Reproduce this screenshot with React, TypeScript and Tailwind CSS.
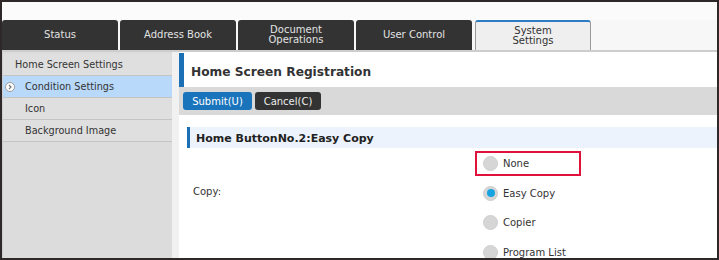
import React from 'react';

const tabs = [
  { label: ['Status'] },
  { label: ['Address Book'] },
  { label: ['Document', 'Operations'] },
  { label: ['User Control'] },
];

const sideItems = [
  { label: 'Home Screen Settings', indent: false, active: false },
  { label: 'Condition Settings', indent: true, active: true },
  { label: 'Icon', indent: true, active: false },
  { label: 'Background Image', indent: true, active: false },
];

const options = [
  { label: 'None', checked: false, boxed: true },
  { label: 'Easy Copy', checked: true, boxed: false },
  { label: 'Copier', checked: false, boxed: false },
  { label: 'Program List', checked: false, boxed: false },
];

function Radio({ checked }: { checked: boolean }) {
  return (
    <span className="w-[15px] h-[15px] rounded-full bg-[#d6d6d6] border border-[#cfcfcf] flex items-center justify-center shrink-0">
      {checked && <span className="w-[8px] h-[8px] rounded-full bg-[#17a3e0]" />}
    </span>
  );
}

export default function App() {
  return (
    <div
      className="w-[719px] h-[260px] overflow-hidden border-2 border-[#2f2828] bg-[#fafafa] flex flex-col text-[#333]"
      style={{ fontFamily: '"DejaVu Sans", Verdana, sans-serif' }}
    >
      <div className="h-[18px] shrink-0 bg-[#fbfbfb]" />

      {/* tab row */}
      <div className="h-[30px] shrink-0 flex gap-[2px] bg-[#f7f7f7]">
        {tabs.map((t) => (
          <div
            key={t.label.join(' ')}
            className="w-[116px] bg-[#333333] rounded-t-[3px] flex flex-col items-center justify-center text-[10px] leading-[10px] text-[#e2e2e2]"
          >
            {t.label.map((l) => (
              <span key={l}>{l}</span>
            ))}
          </div>
        ))}
        <div className="ml-[1px] w-[116px] bg-[#efefef] border-t-2 border-t-[#2c7cc1] border-x border-x-[#9a9a9a] rounded-t-[3px] flex flex-col items-center justify-center text-[10px] leading-[10px] text-[#333]">
          <span>System</span>
          <span>Settings</span>
        </div>
      </div>
      <div className="h-[2px] shrink-0 bg-[#cdcdcd]" />

      {/* body */}
      <div className="flex-1 flex min-h-0">
        <aside className="w-[170px] shrink-0 bg-[#dcdcdc] border-l border-[#cfcfcf] pt-[2px]">
          {sideItems.map((it) => (
            <div
              key={it.label}
              className={`h-[22px] flex items-center border-b border-[#c4c4c4] text-[9.7px] pt-[1px] ${
                it.active ? 'bg-[#b8d9fa]' : 'bg-[#dfdfdf]'
              } ${it.indent ? 'pl-[22px]' : 'pl-[12px]'} relative`}
            >
              {it.active && (
                <span className="absolute left-[2px] top-[6px] w-[10px] h-[10px] rounded-full bg-white border border-[#9a9a9a] flex items-center justify-center">
                  <svg width="6" height="6" viewBox="0 0 6 6">
                    <path d="M2 1 L4 3 L2 5" stroke="#777" strokeWidth="1.2" fill="none" />
                  </svg>
                </span>
              )}
              {it.label}
            </div>
          ))}
        </aside>
        <div className="w-[7px] shrink-0 bg-[#f1f1f1]" />

        <main className="flex-1 bg-white pt-[1px] flex flex-col min-w-0">
          <div className="h-[34px] shrink-0 border-l-[5px] border-[#1a6fb5] flex items-center pl-[7px] pt-[4px] text-[12.2px] font-bold text-[#333]">
            Home Screen Registration
          </div>
          <div className="h-[28px] shrink-0 bg-[#d9d9d9] flex items-center gap-[3px] px-[4px]">
            <button className="h-[18px] w-[69px] rounded-[3px] bg-[#1a74bc] text-white text-[10px]">
              Submit(U)
            </button>
            <button className="h-[18px] w-[66px] rounded-[3px] bg-[#333333] text-[#eee] text-[10px]">
              Cancel(C)
            </button>
          </div>

          <div className="mt-[12px] ml-[8px] h-[21px] shrink-0 bg-[#edf3fc] border-l-[3px] border-[#1a6fb5] flex items-center pl-[6px] pt-[3px] text-[11px] font-bold text-[#222]">
            Home ButtonNo.2:Easy Copy
          </div>

          <div className="flex ml-[8px]">
            <div className="w-[288px] shrink-0 pl-[6px] pt-[37px] text-[10px] leading-[14px]">Copy:</div>
            <div className="flex flex-col pt-[1px]">
              {options.map((o) =>
                o.boxed ? (
                  <div key={o.label} className="h-[29.5px] flex items-center">
                    <div className="w-[106px] h-[25px] border-2 border-[#e0123b] flex items-center gap-[5px] pl-[6px] text-[10px]">
                      <Radio checked={o.checked} />
                      {o.label}
                    </div>
                  </div>
                ) : (
                  <div key={o.label} className="h-[29.5px] flex items-center gap-[5px] pl-[8px] text-[10px]">
                    <Radio checked={o.checked} />
                    {o.label}
                  </div>
                )
              )}
            </div>
          </div>
        </main>
      </div>
    </div>
  );
}
